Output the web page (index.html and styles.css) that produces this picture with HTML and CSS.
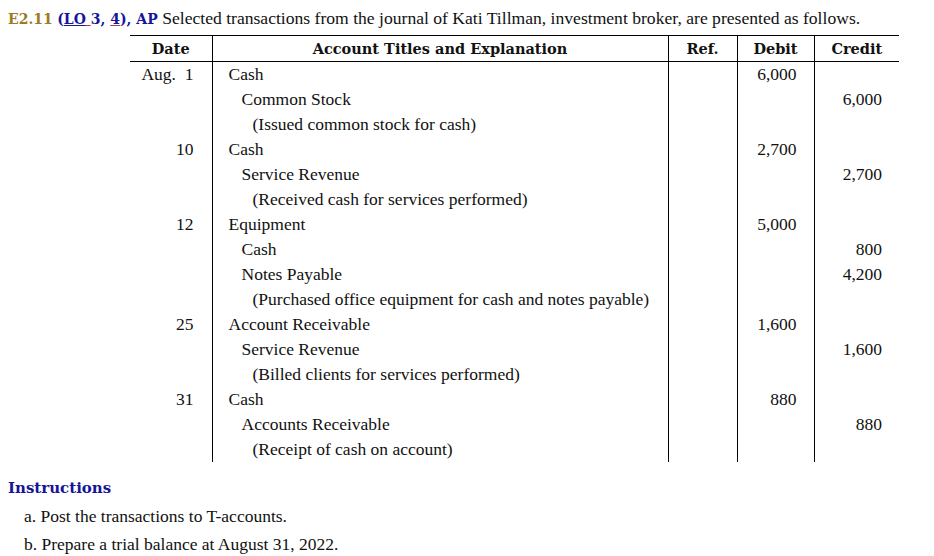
FILE: index.html
```html
<!DOCTYPE html>
<html>
<head>
<meta charset="utf-8">
<link rel="stylesheet" href="styles.css">
</head>
<body>
<div class="page">
  <p class="intro"><span class="num">E2.11</span> <span class="lo">(<span class="u1">LO</span><span class="u2"> </span>3, <span class="u2">4</span>), AP</span> Selected transactions from the journal of Kati Tillman, investment broker, are presented as follows.</p>
  <table class="journal">
    <colgroup><col class="c-date"><col class="c-acct"><col class="c-ref"><col class="c-deb"><col class="c-cred"></colgroup>
    <thead>
      <tr><th>Date</th><th>Account Titles and Explanation</th><th>Ref.</th><th>Debit</th><th>Credit</th></tr>
    </thead>
    <tbody>
      <tr><td class="d">Aug.&nbsp;&nbsp;1</td><td class="a1">Cash</td><td></td><td class="n">6,000</td><td class="n"></td></tr>
      <tr><td class="d"></td><td class="a2">Common Stock</td><td></td><td class="n"></td><td class="n">6,000</td></tr>
      <tr><td class="d"></td><td class="a3">(Issued common stock for cash)</td><td></td><td class="n"></td><td class="n"></td></tr>
      <tr><td class="d">10</td><td class="a1">Cash</td><td></td><td class="n">2,700</td><td class="n"></td></tr>
      <tr><td class="d"></td><td class="a2">Service Revenue</td><td></td><td class="n"></td><td class="n">2,700</td></tr>
      <tr><td class="d"></td><td class="a3">(Received cash for services performed)</td><td></td><td class="n"></td><td class="n"></td></tr>
      <tr><td class="d">12</td><td class="a1">Equipment</td><td></td><td class="n">5,000</td><td class="n"></td></tr>
      <tr><td class="d"></td><td class="a2">Cash</td><td></td><td class="n"></td><td class="n">800</td></tr>
      <tr><td class="d"></td><td class="a2">Notes Payable</td><td></td><td class="n"></td><td class="n">4,200</td></tr>
      <tr><td class="d"></td><td class="a3">(Purchased office equipment for cash and notes payable)</td><td></td><td class="n"></td><td class="n"></td></tr>
      <tr><td class="d">25</td><td class="a1">Account Receivable</td><td></td><td class="n">1,600</td><td class="n"></td></tr>
      <tr><td class="d"></td><td class="a2">Service Revenue</td><td></td><td class="n"></td><td class="n">1,600</td></tr>
      <tr><td class="d"></td><td class="a3">(Billed clients for services performed)</td><td></td><td class="n"></td><td class="n"></td></tr>
      <tr><td class="d">31</td><td class="a1">Cash</td><td></td><td class="n">880</td><td class="n"></td></tr>
      <tr><td class="d"></td><td class="a2">Accounts Receivable</td><td></td><td class="n"></td><td class="n">880</td></tr>
      <tr><td class="d"></td><td class="a3">(Receipt of cash on account)</td><td></td><td class="n"></td><td class="n"></td></tr>
    </tbody>
  </table>
  <h3 class="instr">Instructions</h3>
  <ol class="steps">
    <li>a. Post the transactions to T-accounts.</li>
    <li>b. Prepare a trial balance at August 31, 2022.</li>
  </ol>
</div>
</body>
</html>
```

FILE: styles.css
```css
html, body {
  margin: 0;
  padding: 0;
  background: #ffffff;
}
.page {
  padding: 8px 0 0 8px;
  font-family: "Liberation Serif", "Times New Roman", serif;
  font-size: 17.5px;
  color: #111111;
}
.intro {
  margin: 0;
  height: 20px;
  line-height: 20px;
  white-space: nowrap;
  font-size: 17.6px;
}
.num {
  font-family: "DejaVu Serif", serif;
  font-weight: bold;
  font-size: 14px;
  color: #9c7a1f;
}
.lo {
  font-family: "DejaVu Serif", serif;
  font-weight: bold;
  font-size: 14px;
  color: #16169a;
}
.u1 {
  text-decoration: underline;
  text-decoration-color: #16169a;
}
.u2 {
  text-decoration: underline;
  text-decoration-color: #c0306a;
}
.journal {
  margin: 7px 0 0 122px;
  border-collapse: collapse;
  table-layout: fixed;
  width: 769px;
}
.c-date { width: 82px; }
.c-acct { width: 456px; }
.c-ref { width: 69px; }
.c-deb { width: 77px; }
.c-cred { width: 85px; }
.journal th {
  font-family: "DejaVu Serif", serif;
  font-weight: bold;
  font-size: 14.5px;
  height: 25px;
  padding: 0;
  text-align: center;
  border-top: 1px solid #000;
  border-bottom: 1px solid #000;
  border-left: 1px solid #000;
  line-height: 25px;
}
.journal th:first-child { border-left: none; }
.journal td {
  height: 25px;
  padding: 0;
  line-height: 25px;
  border-left: 1px solid #000;
  white-space: nowrap;
}
.journal td:first-child { border-left: none; }
.journal td.d {
  text-align: right;
  padding-right: 18px;
}
.journal td.n {
  text-align: right;
  padding-right: 17px;
}
.journal td.a1 { padding-left: 16px; }
.journal td.a2 { padding-left: 29px; }
.journal td.a3 { padding-left: 40px; }
.instr {
  margin: 16px 0 0 0;
  font-family: "DejaVu Serif", serif;
  font-weight: bold;
  font-size: 15px;
  line-height: 20px;
  color: #151595;
}
.steps {
  list-style: none;
  margin: 8px 0 0 16px;
  padding: 0;
  display: flex;
  flex-direction: column;
  gap: 8px;
}
.steps li {
  line-height: 20px;
}
```
